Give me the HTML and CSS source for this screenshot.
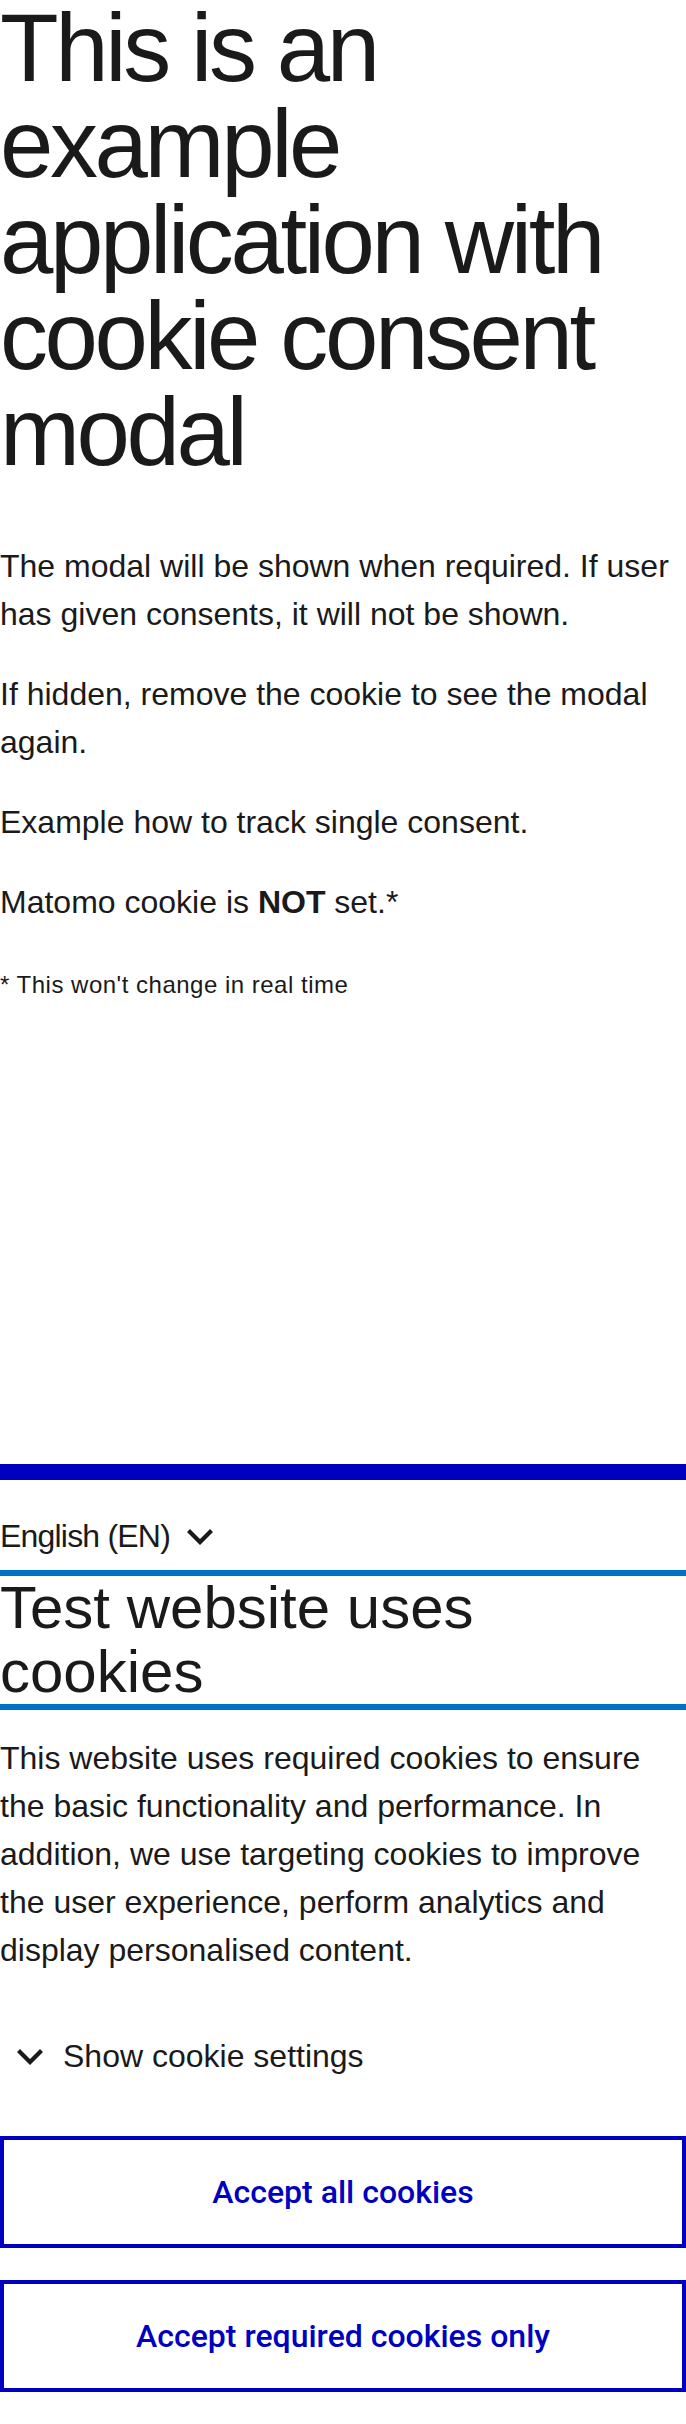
FILE: index.html
```html
<!DOCTYPE html>
<html lang="en">
<head>
<meta charset="utf-8">
<title>Cookie consent example</title>
<link rel="stylesheet" href="styles.css">
</head>
<body>
<main class="page">
  <h1 class="title">This is an example application with cookie consent modal</h1>
  <p class="text">The modal will be shown when required. If user has given consents, it will not be shown.</p>
  <p class="text">If hidden, remove the cookie to see the modal again.</p>
  <p class="text">Example how to track single consent.</p>
  <p class="text">Matomo cookie is <strong class="strong">NOT</strong> set.*</p>
  <p class="text"><small class="note">* This won't change in real time</small></p>
</main>
<section class="banner" aria-label="Cookie consent">
  <div class="banner-bar"></div>
  <div class="lang-row">
    <button class="lang" type="button">English (EN)<svg class="icon" viewBox="0 0 24 24" aria-hidden="true"><path d="M12 13.5l5-5 1.5 1.5-6.5 6.5L5.5 10 7 8.5z"/></svg></button>
  </div>
  <h2 class="banner-title">Test website uses cookies</h2>
  <p class="banner-text">This website uses required cookies to ensure the basic functionality and performance. In addition, we use targeting cookies to improve the user experience, perform analytics and display personalised content.</p>
  <button class="toggle" type="button"><svg class="icon" viewBox="0 0 24 24" aria-hidden="true"><path d="M12 13.5l5-5 1.5 1.5-6.5 6.5L5.5 10 7 8.5z"/></svg><span class="toggle-label">Show cookie settings</span></button>
  <div class="actions">
    <button class="btn" type="button">Accept all cookies</button>
    <button class="btn" type="button">Accept required cookies only</button>
  </div>
</section>
</body>
</html>
```
FILE: styles.css
```css
html, body {
  margin: 0;
  padding: 0;
  background: #ffffff;
}
body {
  display: flex;
  flex-direction: column;
  min-height: 100vh;
  font-family: "Liberation Sans", Arial, sans-serif;
  color: #1a1a1a;
  font-size: 32px;
  line-height: 48px;
}
.page {
  display: flex;
  flex-direction: column;
}
.title {
  margin: 0 0 62px;
  font-size: 96px;
  line-height: 96px;
  font-weight: 400;
  letter-spacing: -3.4px;
}
.text {
  margin: 0 0 32px;
}
.strong {
  font-weight: 700;
}
.note {
  font-size: 24px;
  letter-spacing: 0.5px;
}
.banner {
  margin-top: auto;
  display: flex;
  flex-direction: column;
  background: #ffffff;
}
.banner-bar {
  height: 16px;
  background: #0000bf;
}
.lang-row {
  display: flex;
  padding-top: 32px;
  margin-bottom: 10px;
}
.lang {
  display: flex;
  align-items: center;
  gap: 6px;
  height: 48px;
  padding: 0;
  margin: 0;
  border: 0;
  background: none;
  font: inherit;
  letter-spacing: -0.8px;
  color: #1a1a1a;
}
.icon {
  width: 48px;
  height: 48px;
  flex: none;
  fill: #1a1a1a;
}
.banner-title {
  margin: 0;
  border-top: 6px solid #0072c6;
  border-bottom: 6px solid #0072c6;
  font-size: 60px;
  line-height: 64px;
  font-weight: 400;
}
.banner-text {
  margin: 24px 0 58px;
}
.toggle {
  display: flex;
  align-items: center;
  gap: 9px;
  height: 48px;
  padding: 0 0 0 6px;
  margin: 0 0 56px;
  border: 0;
  background: none;
  font: inherit;
  color: #1a1a1a;
  text-align: left;
}
.actions {
  display: flex;
  flex-direction: column;
  gap: 32px;
  padding-bottom: 32px;
}
.btn {
  height: 112px;
  width: 100%;
  margin: 0;
  padding: 0;
  border: 4px solid #0000bf;
  background: #ffffff;
  color: #0000bf;
  font-family: Roboto, "Liberation Sans", sans-serif;
  font-weight: 500;
  font-size: 32px;
  line-height: 48px;
}
```
